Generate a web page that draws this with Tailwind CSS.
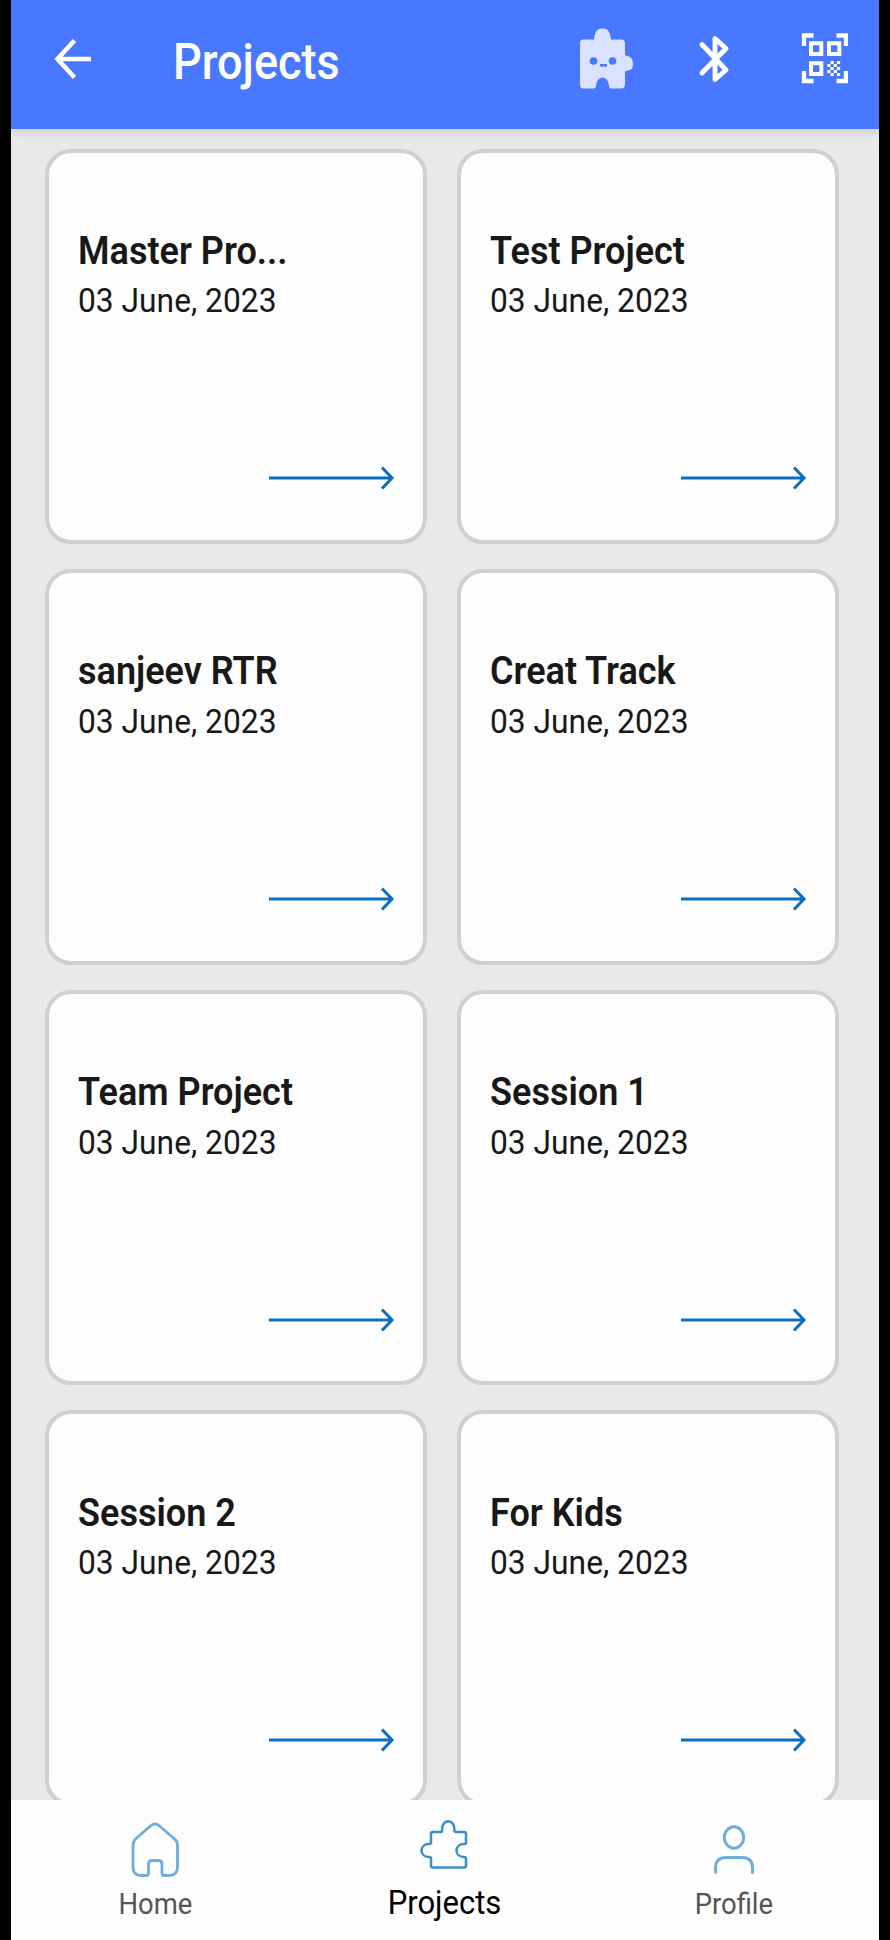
<!DOCTYPE html>
<html lang="en">
<head>
<meta charset="utf-8">
<title>Projects</title>
<script src="https://cdn.jsdelivr.net/npm/@tailwindcss/browser@4"></script>
</head>
<body class="bg-black font-['Roboto',sans-serif]">
<svg class="hidden">
  <symbol id="arrow" viewBox="0 0 128 26"><path d="M1 13H124M114 2.500L124 13L114 23.500" fill="none" stroke="#0b6fbd" stroke-width="3"/></symbol>
</svg>
<div class="ml-[11px] w-[868px] h-[1940px] flex flex-col overflow-hidden bg-[#e9e9e9]">
  <header class="relative z-10 h-[128.500px] shrink-0 flex bg-[#4878ff] shadow-[0_2px_10px_rgba(0,0,0,0.16)]">
    <svg class="ml-[43px] mt-[38px] w-[38px] h-[42px] shrink-0" viewBox="0 0 38 42"><path d="M37 21H4M20.500 2.500L3.500 21L20.500 39.500" fill="none" stroke="#fff" stroke-width="4.600"/></svg>
    <h1 class="ml-[81px] mt-[32px] w-[392.500px] text-[50px] leading-[60px] font-medium text-white"><span class="inline-block origin-left scale-x-[0.900]">Projects</span></h1>
    <svg class="mt-[27px] ml-[12px] w-[56px] h-[63px] shrink-0" viewBox="0 0 56 63">
      <path fill="#dbe2ff" d="M5 12.500H16C17 6 18 1.500 24.500 1.500S32 6 33 12.500H43Q47 12.500 47 16V28Q49 29 51 29.500Q55 31 55 37T51 43Q49 43.500 47 44.500V57Q47 61.500 43 61.500H33Q31.500 61.500 31 59C30.500 54 28 50.500 24.500 50.500S18.500 54 18 59Q17.500 61.500 16 61.500H5Q2 61.500 2 57V16Q2 12.500 5 12.500Z"/>
      <g fill="#4878ff"><circle cx="15.500" cy="34" r="3.800"/><circle cx="34.500" cy="34" r="3.800"/><path d="M22 37H29Q29.500 40 27 40L25.500 39L24 40Q21.500 40 22 37Z"/></g>
    </svg>
    <svg class="mt-[33px] ml-[63px] w-[34px] h-[52px] shrink-0" viewBox="0 0 34 52"><path d="M5 11L29 36.500L18 46V5L29 15L5 39.500" transform="translate(0 .500)" fill="none" stroke="#fff" stroke-width="4.900" stroke-linecap="round" stroke-linejoin="round"/></svg>
    <svg class="mt-[33px] ml-[70px] w-[47px] h-[51px] shrink-0" viewBox="0 0 47 51">
      <g fill="none" stroke="#fff" stroke-width="4.300"><path d="M3 13V2.500H12.500M35.500 2.500H45V13M3 38V48H12.500M35.500 48H45V38"/><path d="M10 10.200H20.300V21H10ZM28 10.200H38.300V21H28ZM10 30.200H20.300V41H10Z" stroke-width="4"/></g>
      <path fill="#fff" d="M29.500 28h3.200v3h-3.200zM35.900 28h3.200v3h-3.200zM26.300 31h3.200v3h-3.200zM32.700 31h3.200v3h-3.200zM29.500 34h3.200v3h-3.200zM35.900 34h3.200v3h-3.200zM26.300 37h3.200v3h-3.200zM32.700 37h3.200v3h-3.200zM29.500 40h3.200v3h-3.200zM35.900 40h3.200v3h-3.200z"/>
    </svg>
  </header>
  <main id="grid" class="h-[1671px] shrink-0 overflow-hidden pt-[20px] pl-[33.500px] grid grid-cols-[382px_382px] auto-rows-[395.500px] content-start gap-x-[30px] gap-y-[25.100px]"></main>
  <nav class="relative flex-1 flex bg-[#fdfdfd] text-[30px] leading-[36px] text-[#555]">
    <div class="w-[289px] flex flex-col items-center">
      <svg class="mt-[22px] w-[48px] h-[56px] -ml-[1px]" viewBox="0 0 48 56"><path d="M20 3.500Q24 .500 28 3.500L43 16.500Q46.500 19 46.500 24V45Q46.500 53.500 38 53.500H33Q31 53.500 31 51V42Q31 38.500 27.500 38.500H21Q17.500 38.500 17.500 42V51Q17.500 53.500 15 53.500H10Q2 53.500 2 45V24Q2 19 5 16.500Z" fill="none" stroke="#6caede" stroke-width="2.800"/></svg>
      <span class="mt-[8px] inline-block scale-x-[0.915]">Home</span>
    </div>
    <div class="w-[289px] flex flex-col items-center text-[33px] text-black">
      <svg class="mt-[19px] w-[48px] h-[52px] -ml-[2px]" viewBox="0 0 48 52"><path d="M14 13H23Q24 13 24 11.500C23.500 -1 37 -1 36.500 11.500Q36.500 13 38 13H46Q48 13 48 15V23.500Q48 25 46 25C36 25 36 38 46 38Q48 38 48 40V46.500Q48 48.500 46 48.500H15Q13 48.500 13 46.500V39.500Q13 38 11 38C1 38 1 25 11 25Q13 25 13 23.500V15Q13 13 15 13" transform="translate(-2 0)" fill="none" stroke="#398fc9" stroke-width="2.500"/></svg>
      <span class="mt-[14px] inline-block scale-x-[0.940]">Projects</span>
    </div>
    <div class="w-[289px] flex flex-col items-center">
      <svg class="mt-[24px] w-[42px] h-[52px]" viewBox="0 0 42 52"><g fill="none" stroke="#6caede" stroke-width="2.900" stroke-linecap="round"><ellipse cx="21" cy="13.500" rx="9.700" ry="10.700"/><path d="M2.500 48.500V44Q2.500 33.500 13 33.500H29Q39.500 33.500 39.500 44V48.500"/></g></svg>
      <span class="mt-[10px] inline-block scale-x-[0.915]">Profile</span>
    </div>
  </nav>
</div>
<script>
const names = ["Master Pro...", "Test Project", "sanjeev RTR", "Creat Track", "Team Project", "Session 1", "Session 2", "For Kids"];
document.getElementById("grid").innerHTML = names.map(n => `
  <article class="flex flex-col border-[4px] border-[#d0d0d0] rounded-[26px] bg-[#fdfdfd] pl-[29.500px] pt-[74.400px]">
    <h2 class="text-[39px] leading-[48px] font-semibold text-[#181818] whitespace-nowrap"><span class="inline-block origin-left scale-x-[0.924]">${n}</span></h2>
    <p class="mt-[5.600px] text-[34px] leading-[40px] text-[#181818] whitespace-nowrap"><span class="inline-block origin-left scale-x-[0.934]">03 June, 2023</span></p>
    <svg class="mt-[145px] ml-[189.500px] w-[128px] h-[26px] shrink-0"><use href="#arrow"/></svg>
  </article>`).join("");
</script>
</body>
</html>
